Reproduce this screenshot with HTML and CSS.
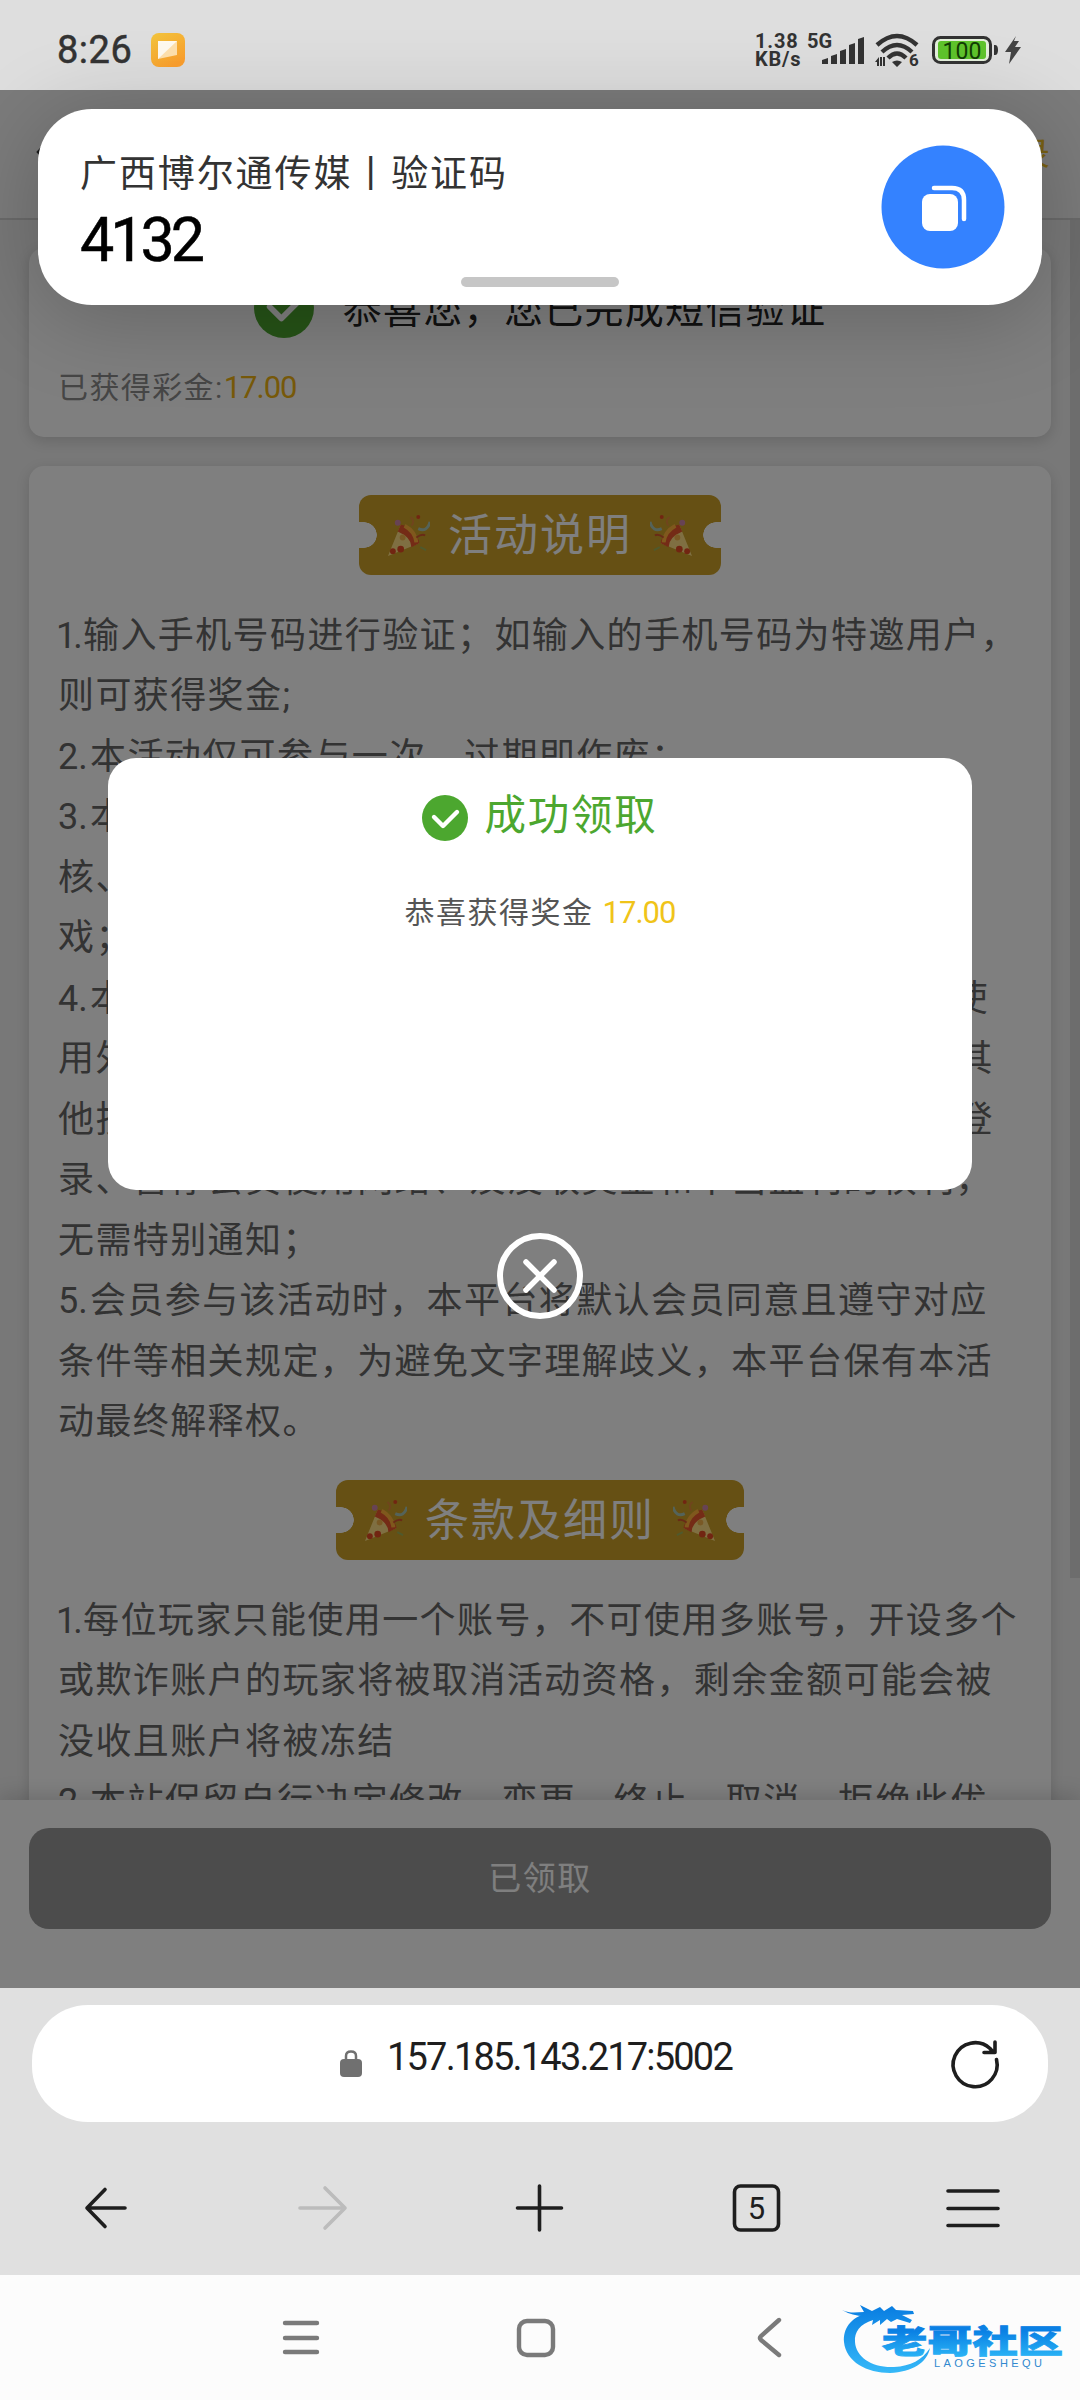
FILE: index.html
```html
<!DOCTYPE html>
<html lang="zh-CN">
<head>
<meta charset="utf-8">
<title>活动说明</title>
<link rel="stylesheet" href="styles.css">
</head>
<body>
<svg class="defs" width="0" height="0">
  <symbol id="party" viewBox="0 0 44 44">
    <path d="M1 43 14 11 33 30Z" fill="#ffdf85"/>
    <path d="M14 11Q20 11 27 19T33 30L25 34Q25 24 11 18Z" fill="#e8572c"/>
    <path d="M18 12Q29 18 30 29" fill="none" stroke="#ffb03a" stroke-width="4"/>
    <circle cx="6" cy="38" r="3" fill="#e34b23"/><circle cx="14" cy="36" r="3.4" fill="#e34b23"/><circle cx="16" cy="24" r="3" fill="#f3b34b"/>
    <circle cx="11" cy="9" r="3" fill="#cf86a8"/><circle cx="32" cy="3" r="2" fill="#e34b23"/>
    <path d="M25 12q4-5-1-9" fill="none" stroke="#e08a3a" stroke-width="2"/>
    <path d="M32 15q9 4 12-7" fill="none" stroke="#a9c6b4" stroke-width="3"/>
    <path d="M30 24q6-4 9-2" fill="none" stroke="#d2552e" stroke-width="2"/>
    <path d="M34 34l6 3" stroke="#9fb35a" stroke-width="2"/>
  </symbol>
  <symbol id="check" viewBox="0 0 46 46">
    <circle cx="23" cy="23" r="23" fill="#4ca72f"/>
    <path d="m12 22 9 9 14-14" fill="none" stroke="#fff" stroke-width="4.400" stroke-linecap="round" stroke-linejoin="round"/>
  </symbol>
</svg>
<div class="screen">
  <header class="status">
    <span class="clock">8:26</span>
    <svg class="app-icon" viewBox="0 0 34 34">
      <defs><linearGradient id="or" x1="0" y1="0" x2=".6" y2="1"><stop stop-color="#f2c53d"/><stop offset="1" stop-color="#fb9f2d"/></linearGradient></defs>
      <rect width="34" height="34" rx="8" fill="url(#or)"/><path d="M7 8h19v14L7 26Z" fill="#ffe1ae"/><path d="M7 8h19L7 26Z" fill="#fffaf0"/>
    </svg>
    <div class="speed"><span>1.38</span><span>KB/s</span></div>
    <span class="net">5G</span>
    <svg class="signal" viewBox="0 0 42 28"><g fill="#333"><path d="M0 28v-4l6-2v6zM9 28v-8l6-2v10zM18 28V15l6-2v15zM27 28V9l6-2v21zM36 28V3l6-2v27z"/></g></svg>
    <svg class="wifi" viewBox="0 0 44 34">
      <g fill="none" stroke="#333" stroke-width="4.400"><path d="M2 12Q22-6 42 12M7 19Q22 5 37 19M13 25Q22 16 31 25"/></g>
      <path d="M17 29q5-3 10 0l-5 5zM0 29l4-5v9H2v-4zM5 24h2v9H5zM8 24h2v9H8z" fill="#333"/>
      <text x="34" y="33" class="wifi-no">6</text>
    </svg>
    <svg class="battery" viewBox="0 0 66 28">
      <rect x="1.500" y="1.500" width="57" height="25" rx="7" fill="#e4efdc" stroke="#333" stroke-width="3"/>
      <rect x="6" y="5" width="48" height="18" rx="3" fill="#5fc42c"/><path d="M62 9h1q3 0 3 5t-3 5h-1z" fill="#333"/>
      <text x="30" y="22.500" class="battery-no">100</text>
    </svg>
    <svg class="bolt" viewBox="0 0 16 28"><path d="M11 0 0 16h6L4 28 16 11H10l4-6H9z" fill="#444"/></svg>
  </header>

  <main class="page">
    <div class="appbar">
      <svg class="appbar-back" viewBox="0 0 20 36"><path d="M17 3 3 18l14 15" fill="none" stroke="#333" stroke-width="4"/></svg>
      <span class="appbar-link">录</span>
    </div>
    <div class="content">
      <section class="card result">
        <div class="result-title"><svg class="result-check"><use href="#check"/></svg><span>恭喜您，您已完成短信验证</span></div>
        <p class="bonus">已获得彩金:<b>17.00</b></p>
      </section>
      <section class="card rules">
        <h2 class="ticket"><svg class="party"><use href="#party"/></svg><span>活动说明</span><svg class="party flip"><use href="#party"/></svg></h2>
        <div class="lines">
          <p><i class="one">1.</i>输入手机号码进行验证；如输入的手机号码为特邀用户，</p>
          <p>则可获得奖金;</p>
          <p><i>2.</i>本活动仅可参与一次，过期即作废；</p>
          <p><i>3.</i>本</p>
          <p>核、</p>
          <p>戏；</p>
          <p class="split"><span><i>4.</i>本</span><span class="inset">使</span></p>
          <p class="split"><span>用外</span><span>其</span></p>
          <p class="split"><span>他技</span><span>登</span></p>
          <p>录、暂停会员使用网络、及没收奖金和不当盈利的权利，</p>
          <p>无需特别通知；</p>
          <p><i>5.</i>会员参与该活动时，本平台将默认会员同意且遵守对应</p>
          <p>条件等相关规定，为避免文字理解歧义，本平台保有本活</p>
          <p>动最终解释权。</p>
        </div>
        <h2 class="ticket"><svg class="party"><use href="#party"/></svg><span>条款及细则</span><svg class="party flip"><use href="#party"/></svg></h2>
        <div class="lines">
          <p><i class="one">1.</i>每位玩家只能使用一个账号，不可使用多账号，开设多个</p>
          <p>或欺诈账户的玩家将被取消活动资格，剩余金额可能会被</p>
          <p>没收且账户将被冻结</p>
          <p><i>2.</i>本站保留自行决定修改、变更、终止、取消、拒绝此优</p>
        </div>
      </section>
    </div>
    <div class="scrollbar"></div>
    <footer class="claim"><button class="claim-btn">已领取</button></footer>
    <div class="overlay">
      <div class="modal">
        <div class="modal-title"><svg class="modal-check"><use href="#check"/></svg><span>成功领取</span></div>
        <p class="modal-text">恭喜获得奖金<b>17.00</b></p>
      </div>
      <svg class="close" viewBox="0 0 86 86"><g fill="none" stroke="#fff" stroke-width="6" stroke-linecap="round"><circle cx="43" cy="43" r="40"/><path d="m29 29 28 28M57 29 29 57" stroke-width="5.500"/></g></svg>
    </div>
  </main>

  <section class="browser">
    <div class="url">
      <svg class="lock" viewBox="0 0 22 28"><rect y="9" width="22" height="18" rx="4" fill="#707070"/><path d="M6 11V6q0-4.500 5-4.500T16 6v5" fill="none" stroke="#707070" stroke-width="2.500"/></svg>
      <span class="address">157.185.143.217:5002</span>
      <svg class="reload" viewBox="0 0 50 50"><path d="M46.500 20.500A22 22 0 1 1 40 9.500L43 13M45 3v10.500H34" fill="none" stroke="#1e1e1e" stroke-width="3.600" stroke-linecap="round" stroke-linejoin="round"/></svg>
    </div>
    <nav class="tools">
      <svg viewBox="0 0 54 54"><path d="M44 27H6M24 8.500 6 27l18 18.500" class="ink"/></svg>
      <svg viewBox="0 0 54 54"><path d="M3 27h45M28 7l20 20-20 20" class="ink faint"/></svg>
      <svg viewBox="0 0 54 54"><path d="M4.500 27h44M26.500 5v44" class="ink"/></svg>
      <svg viewBox="0 0 54 54"><rect x="5.500" y="5" width="44" height="44" rx="6" class="ink"/><text x="27.500" y="38" class="tab-no">5</text></svg>
      <svg viewBox="0 0 54 54"><path d="M3 10h50M3 27.500h50M3 44.500h50" class="ink"/></svg>
    </nav>
  </section>

  <nav class="system">
    <svg viewBox="0 0 44 44"><path d="M6 7h32M6 22h32M6 36h32" class="sys"/></svg>
    <svg viewBox="0 0 44 44"><rect x="6" y="5" width="34" height="34" rx="8" class="sys"/></svg>
    <svg viewBox="0 0 44 44"><path d="M32 4 14 20q-2 2 0 4l18 15" class="sys"/></svg>
  </nav>

  <svg class="watermark" viewBox="0 0 260 120">
    <defs><linearGradient id="bl" gradientUnits="userSpaceOnUse" x1="0" y1="28" x2="0" y2="92"><stop stop-color="#0a7fe2"/><stop offset="1" stop-color="#35b8f8"/></linearGradient>
    <linearGradient id="bt" x1="0" y1="0" x2="0" y2="1"><stop offset=".2" stop-color="#0a80e4"/><stop offset="1" stop-color="#2fbcf8"/></linearGradient></defs>
    <path d="M47 33C30 38 23 49 24 62C26 82 47 93 70 93C92 92 107 83 110 68C102 80 91 86 74 87C52 88 36 77 35 62C34 52 40 44 53 40Z" fill="url(#bl)"/>
    <path d="M22 30C31 34 37 32 44 32L40 25L52 31L60 27L64 31L72 26L76 30L93 31L94 34L82 35L92 40L90 43L77 39L71 42L67 39L60 45L60 40L52 45L53 40L42 41L48 36Q34 37 22 30Z" fill="url(#bl)"/>
    <text transform="translate(62 73) scale(1 .71)" textLength="181" lengthAdjust="spacingAndGlyphs" class="brand" fill="url(#bt)">老哥社区</text>
    <text x="114" y="86.500" textLength="108" class="brand-sub">LAOGESHEQU</text>
  </svg>

  <aside class="toast">
    <div class="toast-text"><p class="sender">广西博尔通传媒丨验证码</p><p class="code">4132</p></div>
    <svg class="copy" viewBox="0 0 124 124"><circle cx="62" cy="62" r="61.500" fill="#3482ff"/><rect x="41" y="49" width="36" height="37" rx="8" fill="#fff"/><path d="M53 43h18q12 0 12 12v19" fill="none" stroke="#fff" stroke-width="4.500" stroke-linecap="round"/></svg>
    <div class="handle"></div>
  </aside>
</div>
</body>
</html>
```
FILE: styles.css
```css
* { box-sizing: border-box; margin: 0; padding: 0; }
body { width: 1080px; height: 2400px; overflow: hidden; font-family: Roboto, "Noto Sans CJK SC", sans-serif; }
svg { display: block; flex: none; overflow: visible; }
.defs { position: absolute; }
i, b { font-style: normal; font-weight: 400; }
.screen { position: relative; width: 1080px; height: 2400px; display: flex; flex-direction: column; overflow: hidden; }

.status { height: 90px; flex: none; display: flex; align-items: center; padding: 10px 59px 0 57px; background: #dedede; color: #333; }
.clock { width: 94px; font-size: 38px; letter-spacing: .5px; line-height: 40px; -webkit-text-stroke: .5px #333; }
.app-icon { width: 34px; height: 34px; }
.speed { width: 52px; margin-left: 570px; display: flex; flex-direction: column; font-size: 20px; font-weight: 700; line-height: 18px; letter-spacing: .8px; white-space: nowrap; }
.net { width: 15px; font-size: 20px; font-weight: 700; line-height: 18px; margin-top: -18px; }
.signal { width: 42px; height: 28px; }
.wifi { width: 44px; height: 34px; margin-left: 11px; }
.wifi-no { font-size: 17px; font-weight: 700; fill: #333; }
.battery { width: 66px; height: 28px; margin-left: 13px; }
.battery-no { font-size: 23px; font-weight: 400; fill: #123d05; text-anchor: middle; }
.bolt { width: 16px; height: 28px; margin-left: 7px; }

.page { position: relative; height: 1898px; flex: none; display: flex; flex-direction: column; background: #f0f0f0; overflow: hidden; }
.appbar { height: 130px; flex: none; display: flex; align-items: center; justify-content: space-between; padding: 0 30px 4px 36px; background: #f7f7f7; border-bottom: 2px solid #d4d4d4; }
.appbar-back { width: 20px; height: 36px; }
.appbar-link { font-size: 33px; color: #f0c028; }
.content { flex: 1; min-height: 0; overflow: hidden; display: flex; flex-direction: column; gap: 29px; padding: 28px 29px 0; }
.card { flex: none; background: #fff; border-radius: 15px; box-shadow: 0 4px 14px rgba(0,0,0,.14); }
.result { height: 189px; padding: 30px 30px 0 29px; display: flex; flex-direction: column; gap: 30px; }
.result-title { display: flex; align-items: center; justify-content: center; gap: 29px; height: 60px; font-size: 39px; letter-spacing: 1.3px; padding-left: 1px; color: #222; white-space: nowrap; }
.result-title span { margin-top: -4px; }
.result-check { width: 60px; height: 60px; }
.bonus { font-size: 30px; line-height: 40px; letter-spacing: 1.4px; color: #8c8c8c; white-space: nowrap; }
.bonus b { color: #f0b414; font-size: 31px; letter-spacing: -1px; }
.rules { height: 1500px; padding: 29px 29px 0; display: flex; flex-direction: column; align-items: center; }
.ticket { flex: none; height: 80px; display: flex; align-items: center; gap: 18px; padding: 0 28px; border-radius: 12px; color: #fff; font-size: 44px; font-weight: 400; letter-spacing: 2px; white-space: nowrap;
  background:
    radial-gradient(circle 13px at 5px 50%, #fff 96%, transparent 100%),
    radial-gradient(circle 13px at calc(100% - 5px) 50%, #fff 96%, transparent 100%),
    linear-gradient(#fff, #fff) 0 50% / 5px 26px no-repeat,
    linear-gradient(#fff, #fff) 100% 50% / 5px 26px no-repeat,
    #cca028; }
.ticket span { margin-top: -6px; }
.party { width: 43px; height: 43px; }
.flip { transform: scaleX(-1); }
.lines { align-self: stretch; position: relative; top: 1.500px; margin: 29px 0; color: #666; font-size: 36px; line-height: 60.5px; letter-spacing: 1.4px; white-space: nowrap; }
.lines i { display: inline-block; width: 32px; letter-spacing: 0; }
.lines i.one { width: 25px; letter-spacing: -3px; text-indent: -2px; }
.split { display: flex; justify-content: space-between; padding-right: 28px; }
.inset { margin-right: 5px; }
.scrollbar { position: absolute; right: 0; top: 130px; width: 10px; height: 1358px; background: #dadada; }
.claim { position: relative; height: 188px; flex: none; padding: 28px 29px; background: #fff; box-shadow: 0 -4px 20px rgba(0,0,0,.16); }
.claim-btn { display: block; width: 100%; height: 101px; padding-bottom: 5px; border: 0; border-radius: 20px; background: #999; color: #fff; font: 33px Roboto, "Noto Sans CJK SC", sans-serif; letter-spacing: 1.5px; }
.overlay { position: absolute; inset: 0; background: rgba(0,0,0,.5); display: flex; flex-direction: column; align-items: center; gap: 43px; padding-top: 668px; }
.modal { width: 864px; height: 432px; flex: none; border-radius: 28px; background: #fff; padding-top: 30px; display: flex; flex-direction: column; align-items: center; }
.modal-title { height: 54px; display: flex; align-items: center; gap: 16px; color: #4ca72f; font-size: 41.500px; letter-spacing: 1.8px; white-space: nowrap; }
.modal-title span { margin-top: -7px; }
.modal-check { width: 46px; height: 46px; margin-top: 6px; }
.modal-text { margin-top: 51px; line-height: 40px; font-size: 30px; letter-spacing: 1.5px; color: #555; white-space: nowrap; }
.modal-text b { margin-left: 9px; color: #f0c419; font-size: 31px; letter-spacing: -1px; }
.close { width: 86px; height: 86px; }

.browser { height: 287px; flex: none; padding: 17px 0 0; background: #e0e0e0; }
.url { height: 117px; margin: 0 32px; border-radius: 56px; background: #fff; display: flex; align-items: center; padding: 0 48px 0 308px; }
.lock { width: 22px; height: 28px; }
.address { flex: 1; margin: -14px 0 0 25px; font-size: 38px; letter-spacing: -1.8px; color: #1e1e1e; white-space: nowrap; }
.reload { width: 50px; height: 50px; }
.tools { height: 153px; margin-top: 9px; display: grid; grid-template-columns: repeat(5, 1fr); place-items: center; }
.tools svg { width: 54px; height: 54px; }
.ink { fill: none; stroke: #1e1e1e; stroke-width: 3.6; stroke-linecap: round; stroke-linejoin: round; }
.faint { stroke: #bcbcbc; }
.tab-no { font-size: 31px; fill: #1e1e1e; text-anchor: middle; }
.system { flex: 1; display: flex; gap: 190px; align-items: center; padding-left: 279px; background: #fcfcfc; }
.system svg { width: 44px; height: 44px; }
.sys { fill: none; stroke: #7a7a7a; stroke-width: 4.4; stroke-linecap: round; }
.watermark { position: absolute; left: 820px; top: 2280px; width: 260px; height: 120px; }
.brand { font-size: 45px; font-weight: 900; stroke: url(#bt); stroke-width: 1.2px; }
.brand-sub { font: 11px "Liberation Sans", sans-serif; fill: #3189cf; }

.toast { position: absolute; left: 38px; top: 109px; width: 1004px; height: 196px; border-radius: 54px; background: #fff; box-shadow: 0 12px 90px rgba(0,0,0,.22); display: flex; justify-content: space-between; align-items: flex-start; padding: 37px 37px 0 42px; }
.copy { width: 124px; height: 124px; margin-top: -1px; }
.sender { height: 56px; font-size: 37px; line-height: 57px; letter-spacing: 1.9px; color: #333; white-space: nowrap; }
.code { font-size: 61px; line-height: 76px; letter-spacing: -4px; color: #000; -webkit-text-stroke: .5px #000; }
.handle { position: absolute; left: 423px; top: 168px; width: 158px; height: 10px; border-radius: 5px; background: #c6c6c6; }
```
